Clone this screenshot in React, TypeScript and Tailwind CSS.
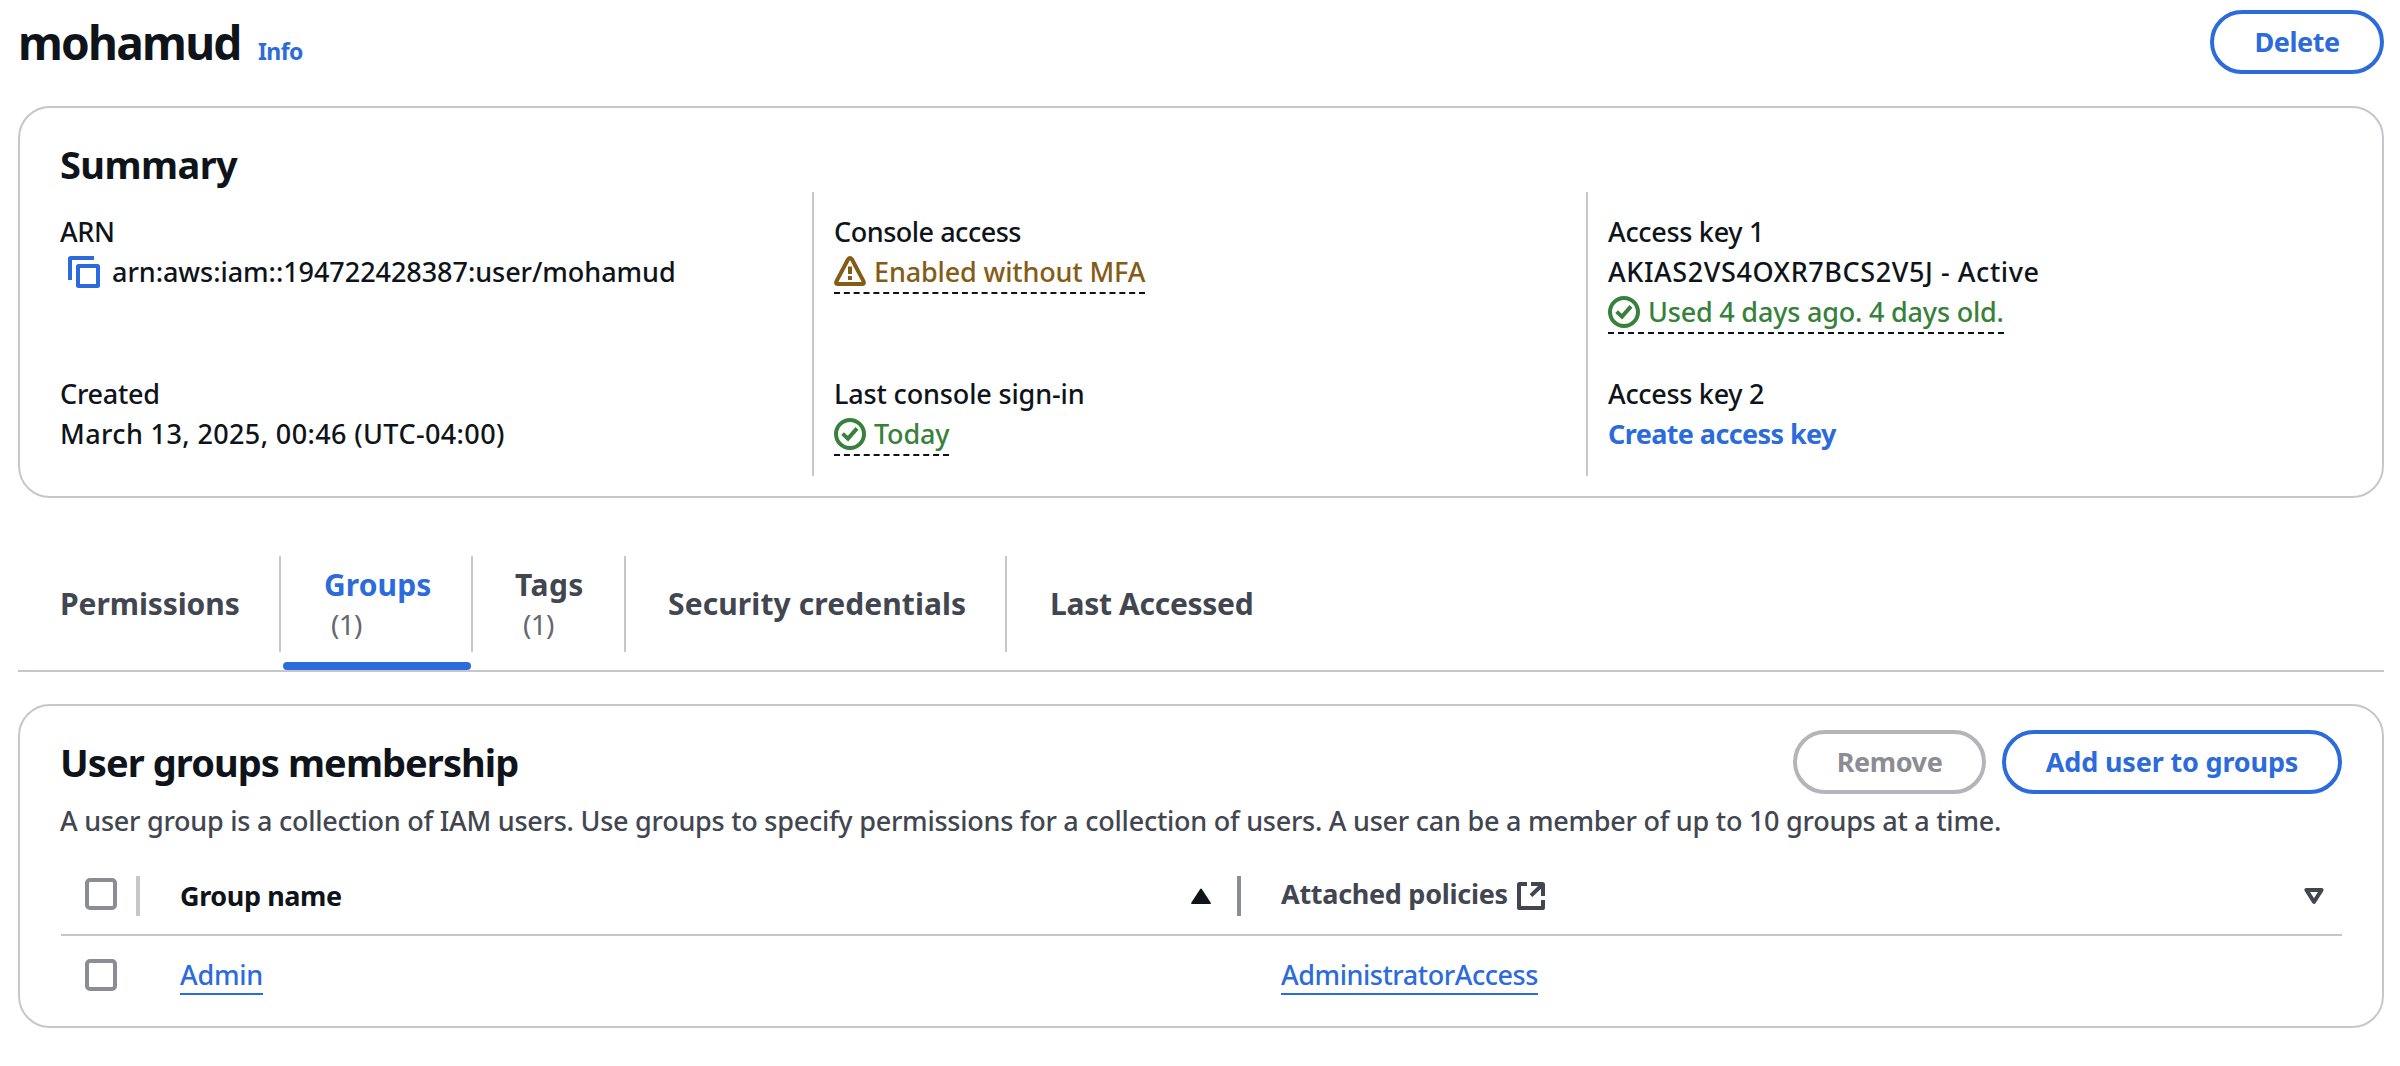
import React from "react";

function CheckCircle() {
  return (
    <svg width="32" height="32" viewBox="0 0 32 32" fill="none" stroke="currentColor" strokeWidth="4" className="block shrink-0">
      <circle cx="16" cy="16" r="14" />
      <path d="M8.6 15.6 14 20.6 23 10.4" />
    </svg>
  );
}

function Warning() {
  return (
    <svg width="32" height="32" viewBox="0 0 32 32" fill="none" stroke="currentColor" strokeWidth="4" className="block shrink-0">
      <path d="M14.1 3.2Q16 .8 17.9 3.2L29.6 25.4Q30.6 28 28 28H4Q1.4 28 2.4 25.4Z" strokeLinejoin="round" />
      <path d="M16 10.5V18M16 20V24" />
    </svg>
  );
}

function Copy() {
  return (
    <svg width="32" height="32" viewBox="0 0 32 32" fill="none" stroke="#2c6bdb" strokeWidth="4" className="block shrink-0">
      <path d="M2 24V2.8Q2 2 2.8 2H26" />
      <rect x="10" y="10" width="20" height="20" rx=".5" />
    </svg>
  );
}

function External() {
  return (
    <svg width="28" height="28" viewBox="0 0 28 28" fill="none" stroke="currentColor" strokeWidth="4" className="block shrink-0">
      <path d="M10 2H2.6Q2 2 2 2.6V25.4Q2 26 2.6 26H25.4Q26 26 26 25.4V18" />
      <path d="M14 2H25.4Q26 2 26 2.6V14M25.5 2.5 14 13.6" />
    </svg>
  );
}

function Status({ color, icon, children }: { color: string; icon: React.ReactNode; children: React.ReactNode }) {
  return (
    <div className="flex">
      <div className={"flex h-[42px] border-b-2 border-dashed border-b-[#0f141a] " + color}>
        <span className="mr-2 pt-1">{icon}</span>
        {children}
      </div>
    </div>
  );
}

function Checkbox() {
  return <span className="block size-8 rounded-[5px] border-4 border-[#8c8c94] bg-white" />;
}

export default function App() {
  return (
    <main className="h-[1066px] w-[2400px] overflow-hidden bg-white pl-[18px] pr-4 font-['Noto_Sans','Open_Sans',sans-serif] text-[27px] leading-10 font-medium whitespace-nowrap text-[#0f141a]">
      <header className="flex h-[106px] items-start justify-between pt-[10px]">
        <div className="flex items-baseline pt-[2px]">
          <h1 className="w-[240px] text-[46px] leading-[60px] font-bold tracking-[-1.75px]">mohamud</h1>
          <a className="text-[23px] font-bold tracking-[-0.6px] text-[#2c6bdb]">Info</a>
        </div>
        <button className="h-16 w-[174px] rounded-full border-4 border-[#2c6bdb] font-bold tracking-[-0.45px] text-[#2c6bdb]">Delete</button>
      </header>

      <section className="h-[392px] rounded-[32px] border-2 border-[#c6c6cd] pl-10 pr-10">
        <h2 className="mt-8 h-[52px] text-[38px] leading-[48px] font-bold tracking-[-0.57px]">Summary</h2>
        <div className="grid h-[284px] grid-cols-[752px_774px_1fr]">
          <div className="pt-5">
            <div className="h-[162px]">
              <div className="tracking-[-0.4px]">ARN</div>
              <div className="flex">
                <span className="mr-3 ml-2 pt-1"><Copy /></span>
                <span className="tracking-[-0.05px]">arn:aws:iam::194722428387:user/mohamud</span>
              </div>
            </div>
            <div className="tracking-[-0.25px]">Created</div>
            <div className="tracking-[0.38px]">March 13, 2025, 00:46 (UTC-04:00)</div>
          </div>
          <div className="border-l-2 border-[#c6c6cd] pt-5 pl-5">
            <div className="h-[162px]">
              <div className="tracking-[-0.48px]">Console access</div>
              <Status color="text-[#855c16]" icon={<Warning />}>
                <span className="tracking-[-0.15px]">Enabled without MFA</span>
              </Status>
            </div>
            <div className="tracking-[-0.15px]">Last console sign-in</div>
            <Status color="text-[#37813a]" icon={<CheckCircle />}>
              <span className="tracking-[-0.2px]">Today</span>
            </Status>
          </div>
          <div className="border-l-2 border-[#c6c6cd] pt-5 pl-5">
            <div className="h-[162px]">
              <div className="tracking-[-0.3px]">Access key 1</div>
              <div className="tracking-[0.58px]">AKIAS2VS4OXR7BCS2V5J - Active</div>
              <Status color="text-[#37813a]" icon={<CheckCircle />}>
                <span className="tracking-[-0.2px]">Used 4 days ago. 4 days old.</span>
              </Status>
            </div>
            <div className="tracking-[-0.3px]">Access key 2</div>
            <a className="font-bold tracking-[-0.6px] text-[#2c6bdb]">Create access key</a>
          </div>
        </div>
      </section>

      <nav className="mt-[58px] flex h-[116px] items-start border-b-2 border-[#c6c6cd] text-[30px] font-bold text-[#424650]">
        <div className="flex h-24 w-[263px] items-center border-r-2 border-[#c6c6cd] pl-[42px] tracking-[-0.08px]">Permissions</div>
        <div className="relative flex h-24 w-48 flex-col justify-center border-r-2 border-[#c6c6cd] pl-[43px]">
          <span className="tracking-[0.1px] text-[#2c6bdb]">Groups</span>
          <span className="pl-[7px] text-[28px] leading-[38px] font-normal tracking-[-0.7px] text-[#656871]">(1)</span>
          <span className="absolute top-[106px] left-[2px] h-2 w-[188px] rounded-[4px] bg-[#2c6bdb]" />
        </div>
        <div className="flex h-24 w-[153px] flex-col justify-center border-r-2 border-[#c6c6cd] pl-[42px]">
          <span className="tracking-[0.5px]">Tags</span>
          <span className="pl-2 text-[28px] leading-[38px] font-normal tracking-[-0.7px] text-[#656871]">(1)</span>
        </div>
        <div className="flex h-24 w-[381px] items-center border-r-2 border-[#c6c6cd] pl-[42px] tracking-[0.1px]">Security credentials</div>
        <div className="flex h-24 items-center pl-[43px] tracking-[-0.3px]">Last Accessed</div>
      </nav>

      <section className="mt-8 h-[324px] rounded-[32px] border-2 border-[#c6c6cd] pr-10 pl-10">
        <div className="flex h-[94px] items-start justify-between pt-6">
          <h2 className="pt-2 text-[38px] leading-[48px] font-bold tracking-[-0.92px]">User groups membership</h2>
          <div className="flex gap-4 font-bold">
            <button className="h-16 w-[193px] rounded-full border-4 border-[#b4b4bb] tracking-[-0.38px] text-[#8c8c94]">Remove</button>
            <button className="h-16 w-[340px] rounded-full border-4 border-[#2c6bdb] tracking-[-0.16px] text-[#2c6bdb]">Add user to groups</button>
          </div>
        </div>
        <p className="mt-[1px] tracking-[-0.25px] text-[#424650]">A user group is a collection of IAM users. Use groups to specify permissions for a collection of users. A user can be a member of up to 10 groups at a time.</p>
        <div className="mt-[17px] ml-px flex h-[78px] items-center border-b-2 border-[#c6c6cd] font-bold">
          <div className="flex h-full w-[79px] items-start pt-[18px] pl-6">
            <div className="mt-[2px]"><Checkbox /></div>
            <span className="ml-[19px] h-10 w-1 shrink-0 bg-[#c6c6cd]" />
          </div>
          <div className="flex h-10 w-[1101px] items-center pl-10">
            <span className="-mt-px flex-1 tracking-[-0.4px]">Group name</span>
            <svg width="20" height="16" viewBox="0 0 20 16" className="mr-[26px]">
              <path d="M9.2 1Q10 0 10.8 1L19.6 14.6Q20.2 16 19 16H1Q-.2 16 .4 14.6Z" fill="#0f141a" />
            </svg>
            <span className="h-10 w-1 bg-[#8c8c94]" />
          </div>
          <div className="flex h-10 flex-1 items-center pl-10 text-[#424650]">
            <span className="-mt-[5px] tracking-[-0.29px]">Attached policies</span>
            <span className="ml-[9px]"><External /></span>
            <svg width="20" height="16" viewBox="0 0 20 16" fill="none" className="mr-[18px] ml-auto">
              <path d="M2.4 2H17.6L10 13.8Z" stroke="currentColor" strokeWidth="4" strokeLinejoin="round" />
            </svg>
          </div>
        </div>
        <div className="ml-px flex pt-[19px] text-[#2c6bdb]">
          <div className="w-[119px] pt-1 pl-6"><Checkbox /></div>
          <div className="flex w-[1101px]"><a className="h-10 border-b-2 border-[#2c6bdb] tracking-[-0.25px]">Admin</a></div>
          <a className="h-10 border-b-2 border-[#2c6bdb] tracking-[-0.45px]">AdministratorAccess</a>
        </div>
      </section>
    </main>
  );
}
